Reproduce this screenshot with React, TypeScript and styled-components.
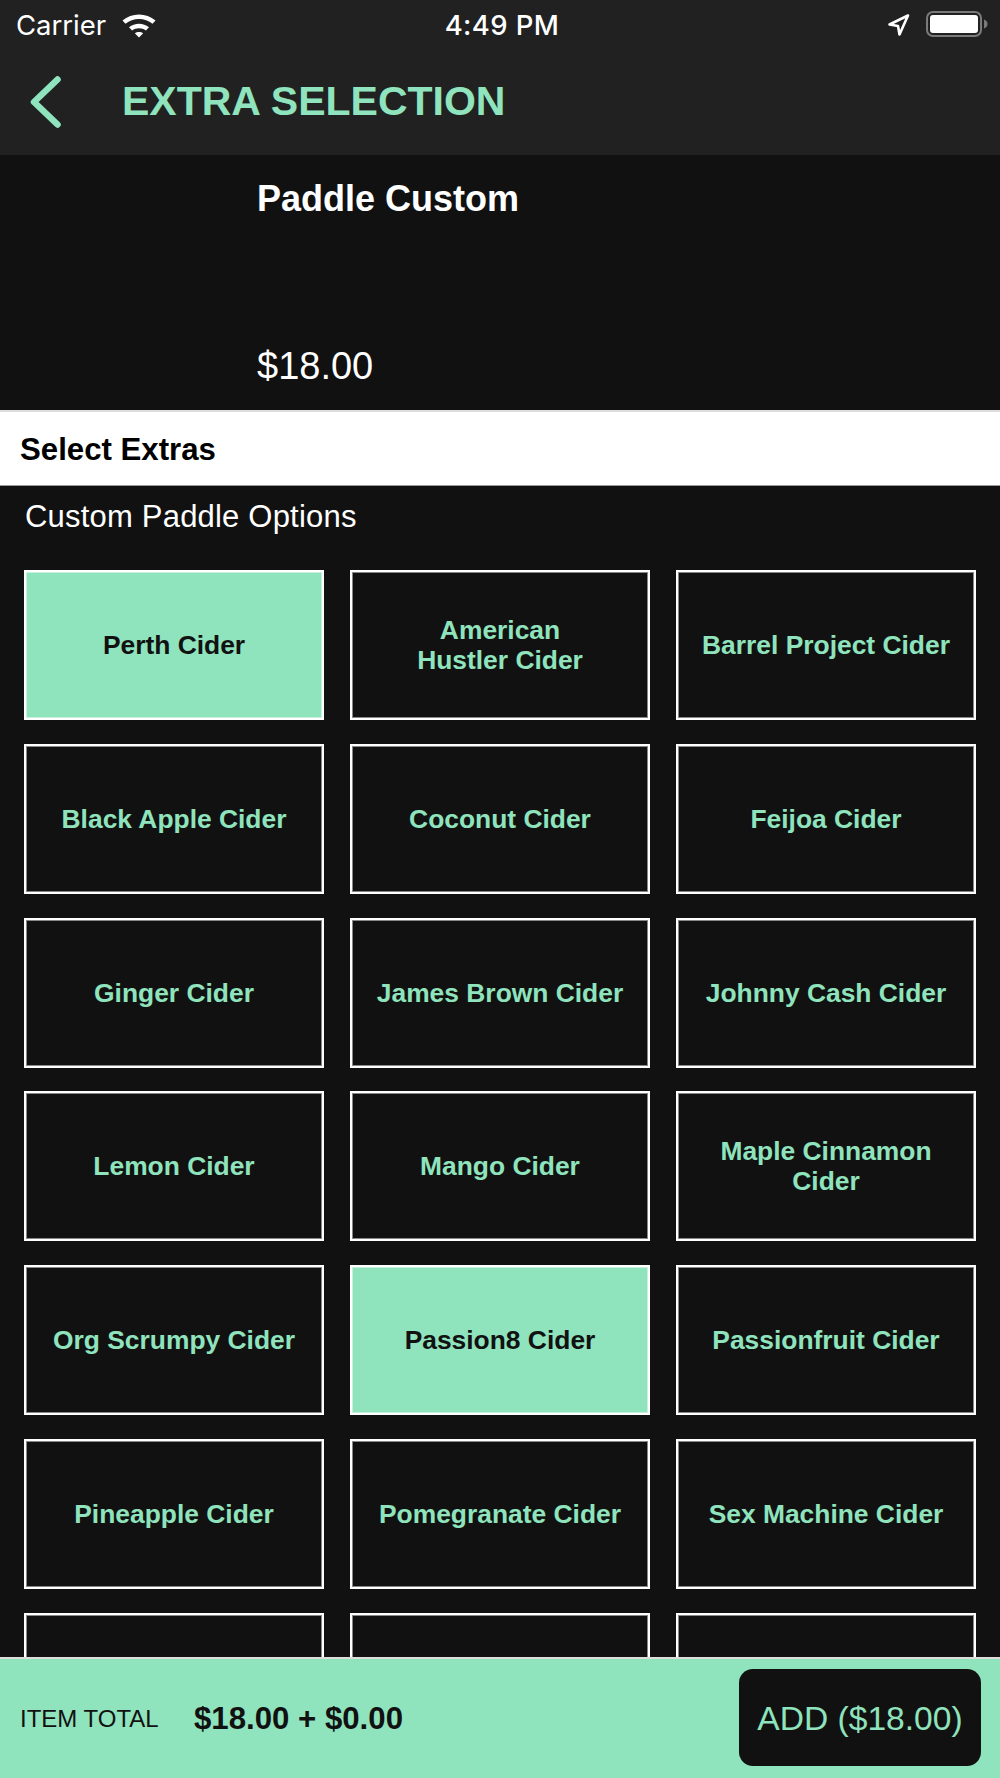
import React from "react";
import styled, { createGlobalStyle } from "styled-components";

const GREEN = "#8fe3bd";
const DARK = "#111111";

const extras = [
  { name: "Perth Cider", on: true },
  { name: "American\nHustler Cider" },
  { name: "Barrel Project Cider" },
  { name: "Black Apple Cider" },
  { name: "Coconut Cider" },
  { name: "Feijoa Cider" },
  { name: "Ginger Cider" },
  { name: "James Brown Cider" },
  { name: "Johnny Cash Cider" },
  { name: "Lemon Cider" },
  { name: "Mango Cider" },
  { name: "Maple Cinnamon\nCider" },
  { name: "Org Scrumpy Cider" },
  { name: "Passion8 Cider", on: true },
  { name: "Passionfruit Cider" },
  { name: "Pineapple Cider" },
  { name: "Pomegranate Cider" },
  { name: "Sex Machine Cider" },
  { name: "" },
  { name: "" },
  { name: "" },
];

const Global = createGlobalStyle`
  html, body {
    margin: 0;
    padding: 0;
    background: ${DARK};
    font-family: "Liberation Sans", Arial, sans-serif;
  }
`;

const Screen = styled.div`
  width: 1000px;
  height: 1778px;
  display: flex;
  flex-direction: column;
  overflow: hidden;
  background: ${DARK};
`;

const Header = styled.header`
  flex: none;
  height: 155px;
  background: #212121;
`;

const StatusBar = styled.div`
  height: 50px;
  display: grid;
  grid-template-columns: 1fr auto 1fr;
  align-items: center;
  padding: 0 12px 0 16px;
  color: #fff;
  font-family: Inter, sans-serif;
  font-size: 27.5px;
`;

const StatusLeft = styled.div`
  display: flex;
  align-items: center;
  gap: 15px;
  font-weight: 400;
`;

const Clock = styled.div`
  font-weight: 500;
  letter-spacing: 0.4px;
`;

const StatusRight = styled.div`
  display: flex;
  align-items: center;
  justify-content: flex-end;
  gap: 14px;
`;

const NavBar = styled.div`
  height: 105px;
  display: flex;
  align-items: center;
  padding: 0 0 2px 30px;
  box-sizing: border-box;
`;

const Title = styled.h1`
  margin: 0 0 0 60px;
  color: ${GREEN};
  font-size: 41px;
  font-weight: 700;
`;

const Product = styled.section`
  flex: none;
  height: 255px;
  box-sizing: border-box;
  padding: 23px 0 22px 257px;
  display: flex;
  flex-direction: column;
  justify-content: space-between;
  color: #fff;
`;

const ProductName = styled.div`
  font-size: 36px;
  font-weight: 700;
`;

const ProductPrice = styled.div`
  font-size: 38px;
`;

const SectionBar = styled.div`
  flex: none;
  height: 76px;
  box-sizing: border-box;
  border-top: 2px solid #dddddd;
  border-bottom: 1px solid #999;
  background: #fff;
  color: #000;
  padding: 3px 0 0 20px;
  display: flex;
  align-items: center;
  font-size: 31.2px;
  font-weight: 700;
`;

const Options = styled.div`
  flex: 1;
  min-height: 0;
  overflow: hidden;
  padding: 0 24px;
`;

const GroupLabel = styled.div`
  color: #fff;
  font-size: 31px;
  letter-spacing: 0.2px;
  height: 84px;
  padding: 13px 0 0 1px;
  box-sizing: border-box;
`;

const Grid = styled.div`
  display: grid;
  grid-template-columns: repeat(3, 300px);
  grid-auto-rows: 150px;
  column-gap: 26px;
  row-gap: 23.83px;
`;

const Tile = styled.div<{ $on?: boolean }>`
  box-sizing: border-box;
  border: 2px solid #fff;
  box-shadow: inset 0 0 0 1px rgba(255, 255, 255, 0.5);
  background: ${(p) => (p.$on ? GREEN : DARK)};
  color: ${(p) => (p.$on ? DARK : GREEN)};
  display: flex;
  align-items: center;
  justify-content: center;
  text-align: center;
  white-space: pre-line;
  font-size: 26.4px;
  font-weight: 700;
  line-height: 30px;
  padding: 0 20px;
`;

const Footer = styled.footer`
  flex: none;
  height: 121px;
  box-sizing: border-box;
  border-top: 2px solid #e0dcdc;
  background: ${GREEN};
  display: flex;
  align-items: center;
  padding: 0 19px 2px 20px;
  color: ${DARK};
`;

const TotalLabel = styled.div`
  font-size: 24px;
  width: 174px;
  padding-top: 2px;
`;

const TotalValue = styled.div`
  flex: 1;
  font-size: 31.2px;
  font-weight: 700;
  padding-top: 2px;
`;

const AddButton = styled.button`
  width: 242px;
  height: 97px;
  border: 0;
  border-radius: 14px;
  background: ${DARK};
  color: ${GREEN};
  font-family: inherit;
  font-size: 33.6px;
  padding: 2px 0 0;
`;

const Wifi = () => (
  <svg width="36" height="26" viewBox="0 0 36 26">
    <path
      d="M1.5 8.6C10.6.6 25.4.6 34.5 8.6l-3 3.2C24 5.300 12 5.300 4.500 11.800zM8 15.300c5.700-4.800 14.300-4.800 20 0l-3.100 3.200c-3.900-3.100-9.900-3.100-13.800 0zM13.800 21.300c2.500-1.900 5.900-1.900 8.400 0L18 25.600z"
      fill="#fff"
    />
  </svg>
);

const LocationArrow = () => (
  <svg width="24" height="24" viewBox="0 0 24 24">
    <path
      d="M22 2.500 3.500 11.500l8.500 1.500 1.500 8.500z"
      fill="none"
      stroke="#fff"
      strokeWidth="2.600"
      strokeLinejoin="round"
    />
  </svg>
);

const Battery = () => (
  <svg width="64" height="28" viewBox="0 0 64 28">
    <rect x="3" y="1" width="54" height="24" rx="6" fill="none" stroke="#7a7a7a" strokeWidth="2" />
    <rect x="6" y="4" width="48" height="18" rx="3" fill="#fff" />
    <path d="M60 8.500c2.400.8 3.500 2.400 3.500 4.500s-1.100 3.700-3.500 4.500z" fill="#7a7a7a" />
  </svg>
);

const BackChevron = () => (
  <svg width="32" height="54" viewBox="0 0 32 54">
    <path
      d="M27.500 4.500 4 27l23.500 22.500"
      fill="none"
      stroke={GREEN}
      strokeWidth="6.500"
      strokeLinecap="round"
      strokeLinejoin="round"
    />
  </svg>
);

export default function App() {
  return (
    <Screen>
      <Global />
      <Header>
        <StatusBar>
          <StatusLeft>
            Carrier
            <Wifi />
          </StatusLeft>
          <Clock>4:49 PM</Clock>
          <StatusRight>
            <LocationArrow />
            <Battery />
          </StatusRight>
        </StatusBar>
        <NavBar>
          <BackChevron />
          <Title>EXTRA SELECTION</Title>
        </NavBar>
      </Header>
      <Product>
        <ProductName>Paddle Custom</ProductName>
        <ProductPrice>$18.00</ProductPrice>
      </Product>
      <SectionBar>Select Extras</SectionBar>
      <Options>
        <GroupLabel>Custom Paddle Options</GroupLabel>
        <Grid>
          {extras.map((x, i) => (
            <Tile key={i} $on={x.on}>
              {x.name}
            </Tile>
          ))}
        </Grid>
      </Options>
      <Footer>
        <TotalLabel>ITEM TOTAL</TotalLabel>
        <TotalValue>$18.00 + $0.00</TotalValue>
        <AddButton>ADD ($18.00)</AddButton>
      </Footer>
    </Screen>
  );
}
